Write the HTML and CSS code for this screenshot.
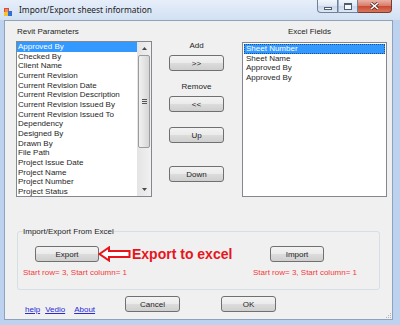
FILE: index.html
```html
<!DOCTYPE html>
<html lang="en">
<head>
<meta charset="UTF-8" />
<title>Import/Export sheest information</title>
<link rel="stylesheet" href="styles.css">
</head>
<body>
<div class="window">
    <div class="titlebar">
        <svg class="app-icon" width="8" height="8" viewBox="0 0 8 8">
            <rect x="0" y="0" width="5" height="5" fill="#d8502e"/>
            <rect x="0" y="4" width="4" height="4" fill="#f2c335"/>
            <rect x="4" y="3" width="4" height="5" fill="#2f6fd6"/>
            <rect x="1" y="1" width="3" height="3" fill="#f08a5d"/>
        </svg>
        <div class="title">Import/Export sheest information</div>
        <div class="caption-buttons">
            <div class="cap cap-min"><span class="min-bar"></span></div>
            <div class="cap cap-max"><span class="max-box"></span></div>
            <div class="cap cap-close">
                <svg width="9" height="8" viewBox="0 0 9 8">
                    <path d="M1 1 L8 7 M8 1 L1 7" stroke="#5a2a24" stroke-width="3"/>
                    <path d="M1 1 L8 7 M8 1 L1 7" stroke="#fff" stroke-width="1.6"/>
                </svg>
            </div>
        </div>
    </div>
    <div class="client">
        <div class="lists">
            <div class="col-left">
                <div class="caption left-caption">Revit Parameters</div>
                <div class="listbox">
                    <div class="items">
                        <div class="item selected">Approved By</div>
                        <div class="item">Checked By</div>
                        <div class="item">Client Name</div>
                        <div class="item">Current Revision</div>
                        <div class="item">Current Revision Date</div>
                        <div class="item">Current Revision Description</div>
                        <div class="item">Current Revision Issued By</div>
                        <div class="item">Current Revision Issued To</div>
                        <div class="item">Dependency</div>
                        <div class="item">Designed By</div>
                        <div class="item">Drawn By</div>
                        <div class="item">File Path</div>
                        <div class="item">Project Issue Date</div>
                        <div class="item">Project Name</div>
                        <div class="item">Project Number</div>
                        <div class="item">Project Status</div>
                    </div>
                    <div class="scrollbar">
                        <div class="sb-arrow">
                            <svg width="5" height="3" viewBox="0 0 5 3"><path d="M0 3 L2.5 0 L5 3 Z" fill="#4a4a4a"/></svg>
                        </div>
                        <div class="sb-thumb">
                            <div class="grip"><span></span><span></span><span></span></div>
                        </div>
                        <div class="sb-track"></div>
                        <div class="sb-arrow">
                            <svg width="5" height="3" viewBox="0 0 5 3"><path d="M0 0 L2.5 3 L5 0 Z" fill="#4a4a4a"/></svg>
                        </div>
                    </div>
                </div>
            </div>
            <div class="col-mid">
                <div class="caption add-caption">Add</div>
                <button class="btn btn-mid">&gt;&gt;</button>
                <div class="caption remove-caption">Remove</div>
                <button class="btn btn-mid">&lt;&lt;</button>
                <button class="btn btn-mid btn-up">Up</button>
                <button class="btn btn-mid btn-down">Down</button>
            </div>
            <div class="col-right">
                <div class="caption right-caption">Excel Fields</div>
                <div class="listbox listbox-right">
                    <div class="items">
                        <div class="item selected focused">Sheet Number</div>
                        <div class="item">Sheet Name</div>
                        <div class="item">Approved By</div>
                        <div class="item">Approved By</div>
                    </div>
                </div>
            </div>
        </div>

        <fieldset class="group">
            <legend>Import/Export From Excel</legend>
            <div class="group-grid">
                <div class="group-col">
                    <div class="export-row">
                        <button class="btn btn-export">Export</button>
                        <svg class="arrow" width="33" height="16" viewBox="0 0 33 16">
                            <polygon points="1.5,8 11,1.5 11,5 31.5,5 31.5,11 11,11 11,14.5" fill="#fff" stroke="#e8141c" stroke-width="2"/>
                        </svg>
                        <span class="note">Export to excel</span>
                    </div>
                    <div class="start-info">Start row= 3, Start column= 1</div>
                </div>
                <div class="group-col">
                    <div class="export-row">
                        <button class="btn btn-import">Import</button>
                    </div>
                    <div class="start-info">Start row= 3, Start column= 1</div>
                </div>
            </div>
        </fieldset>

        <div class="footer">
            <div class="links">
                <a href="#" class="link-help">help</a>
                <a href="#" class="link-vedio">Vedio</a>
                <a href="#">About</a>
            </div>
            <button class="btn btn-footer">Cancel</button>
            <button class="btn btn-footer btn-ok">OK</button>
        </div>

        <svg class="size-grip" width="7" height="7" viewBox="0 0 7 7">
            <rect x="5" y="1" width="1" height="1" fill="#b5b5b5"/>
            <rect x="3" y="3" width="1" height="1" fill="#b5b5b5"/>
            <rect x="5" y="3" width="1" height="1" fill="#b5b5b5"/>
            <rect x="1" y="5" width="1" height="1" fill="#b5b5b5"/>
            <rect x="3" y="5" width="1" height="1" fill="#b5b5b5"/>
            <rect x="5" y="5" width="1" height="1" fill="#b5b5b5"/>
        </svg>
    </div>
</div>
</body>
</html>
```

FILE: styles.css
```css
* { box-sizing: border-box; }
body { margin: 0; font-family: "Liberation Sans", Arial, sans-serif; font-size: 8px; color: #1e1e1e; background: #fff; }

.window { width: 400px; height: 325px; background: #bcd2ee; display: flex; flex-direction: column; overflow: hidden; }

/* title bar */
.titlebar { height: 20px; flex: none; display: flex; align-items: flex-start; background: linear-gradient(#e6eef9, #d2e1f3); }
.app-icon { margin: 8px 0 0 4px; flex: none; }
.title { flex: 1; margin: 4px 0 0 7px; font-family: "Noto Sans", sans-serif; font-size: 8.4px; line-height: 12px; color: #1b1b1b; white-space: nowrap; }
.caption-buttons { display: flex; margin-right: 8px; flex: none; }
.cap { height: 13px; border: 1px solid #6f819a; border-top: none; display: flex; align-items: center; justify-content: center; }
.cap-min { width: 21px; border-radius: 0 0 0 4px; background: linear-gradient(#f2f6fb, #dce6f2 50%, #c8d7ea 52%, #dde8f5); }
.cap-max { width: 20px; border-left: 1px solid #9fb0c5; background: linear-gradient(#f2f6fb, #dce6f2 50%, #c8d7ea 52%, #dde8f5); }
.cap-close { width: 34px; border-left: none; border-color: #7a3b32; border-radius: 0 0 4px 0; background: linear-gradient(#eab1a5, #d97a68 50%, #c84a35 52%, #dc7557); }
.min-bar { width: 8px; height: 3px; margin-top: 5px; background: #fff; border: 1px solid #4f5d70; }
.max-box { width: 8px; height: 7px; border: 1px solid #4f5d70; border-top-width: 2px; background: #f6f9fd; }

/* client area */
.client { flex: 1; margin: 0 7px 5px 4px; background: #f0f0f0; border: 1px solid #8ea2bb; position: relative; }

.lists { display: flex; padding: 5px 0 0 11px; }
.caption { line-height: 12px; height: 12px; white-space: nowrap; }
.col-left { width: 136px; }
.left-caption { padding-left: 1px; }
.col-mid { width: 55px; margin-left: 17px; display: flex; flex-direction: column; align-items: center; }
.col-right { width: 145px; margin-left: 18px; }
.right-caption { text-align: center; padding-right: 10px; }

.listbox { margin-top: 3px; height: 156px; border: 1px solid #828790; background: #fff; display: flex; }
.listbox-right { margin-top: 4px; height: 155px; }
.items { flex: 1; overflow: hidden; }
.listbox-right .items { padding: 1px; }
.item { height: 9.67px; line-height: 9.67px; padding-left: 1px; white-space: nowrap; color: #1e1e1e; }
.listbox-right .item { padding-left: 2px; }
.item.selected { background: #3399ff; color: #fff; }
.item.focused { outline: 1px dotted #1d4f8a; outline-offset: -1px; }

.scrollbar { width: 14px; flex: none; display: flex; flex-direction: column; background: linear-gradient(90deg, #e4e4e4, #f1f1f1); }
.sb-arrow { height: 13px; flex: none; display: flex; align-items: center; justify-content: center; }
.sb-thumb { height: 93px; margin: 0 1px; border: 1px solid #9b9b9b; border-radius: 2px; background: linear-gradient(90deg, #f1f1f1, #d6d6d6); display: flex; align-items: center; justify-content: center; }
.grip { display: flex; flex-direction: column; gap: 1px; }
.grip span { display: block; width: 5px; height: 1px; background: #555; }
.sb-track { flex: 1; }

/* buttons */
.btn { height: 16px; padding: 0; border: 1px solid #707070; border-radius: 3px; background: linear-gradient(#f3f3f3, #ebebeb 48%, #dcdcdc 52%, #cfcfcf); font-family: "Liberation Sans", Arial, sans-serif; font-size: 8px; color: #1e1e1e; display: flex; align-items: center; justify-content: center; }
.btn-mid { width: 55px; margin-top: 3px; }
.add-caption { margin-top: 14px; }
.remove-caption { margin-top: 10px; }
.btn-up { margin-top: 15px; }
.btn-down { margin-top: 23px; }

/* group box */
.group { margin: 28px 0 0 12px; width: 363px; border: 1px solid #d5dfe5; border-radius: 3px; padding: 8px 5px 10px 5px; }
.group legend { padding: 0; font-size: 8px; line-height: 13px; color: #1e1e1e; }
.group-grid { display: grid; grid-template-columns: 230px 1fr; }
.export-row { display: flex; align-items: center; height: 16px; }
.btn-export { width: 64px; margin-left: 12px; }
.btn-import { width: 54px; margin-left: 17px; }
.arrow { margin-left: -1px; flex: none; }
.note { margin-left: 1px; font-size: 14px; font-weight: bold; color: #e8141c; line-height: 16px; white-space: nowrap; }
.start-info { margin-top: 5px; line-height: 12px; color: #f23b3b; white-space: nowrap; }

/* footer */
.footer { display: flex; margin-top: 6px; padding-left: 20px; }
.links { width: 100px; padding-top: 8px; display: flex; }
.links a { color: #2a2ad8; text-decoration: underline; line-height: 12px; }
.link-help { margin-right: 5px; }
.link-vedio { margin-right: 9px; }
.btn-footer { width: 55px; }
.btn-ok { margin-left: 41px; }

.size-grip { position: absolute; right: 0; bottom: 0; }
```
